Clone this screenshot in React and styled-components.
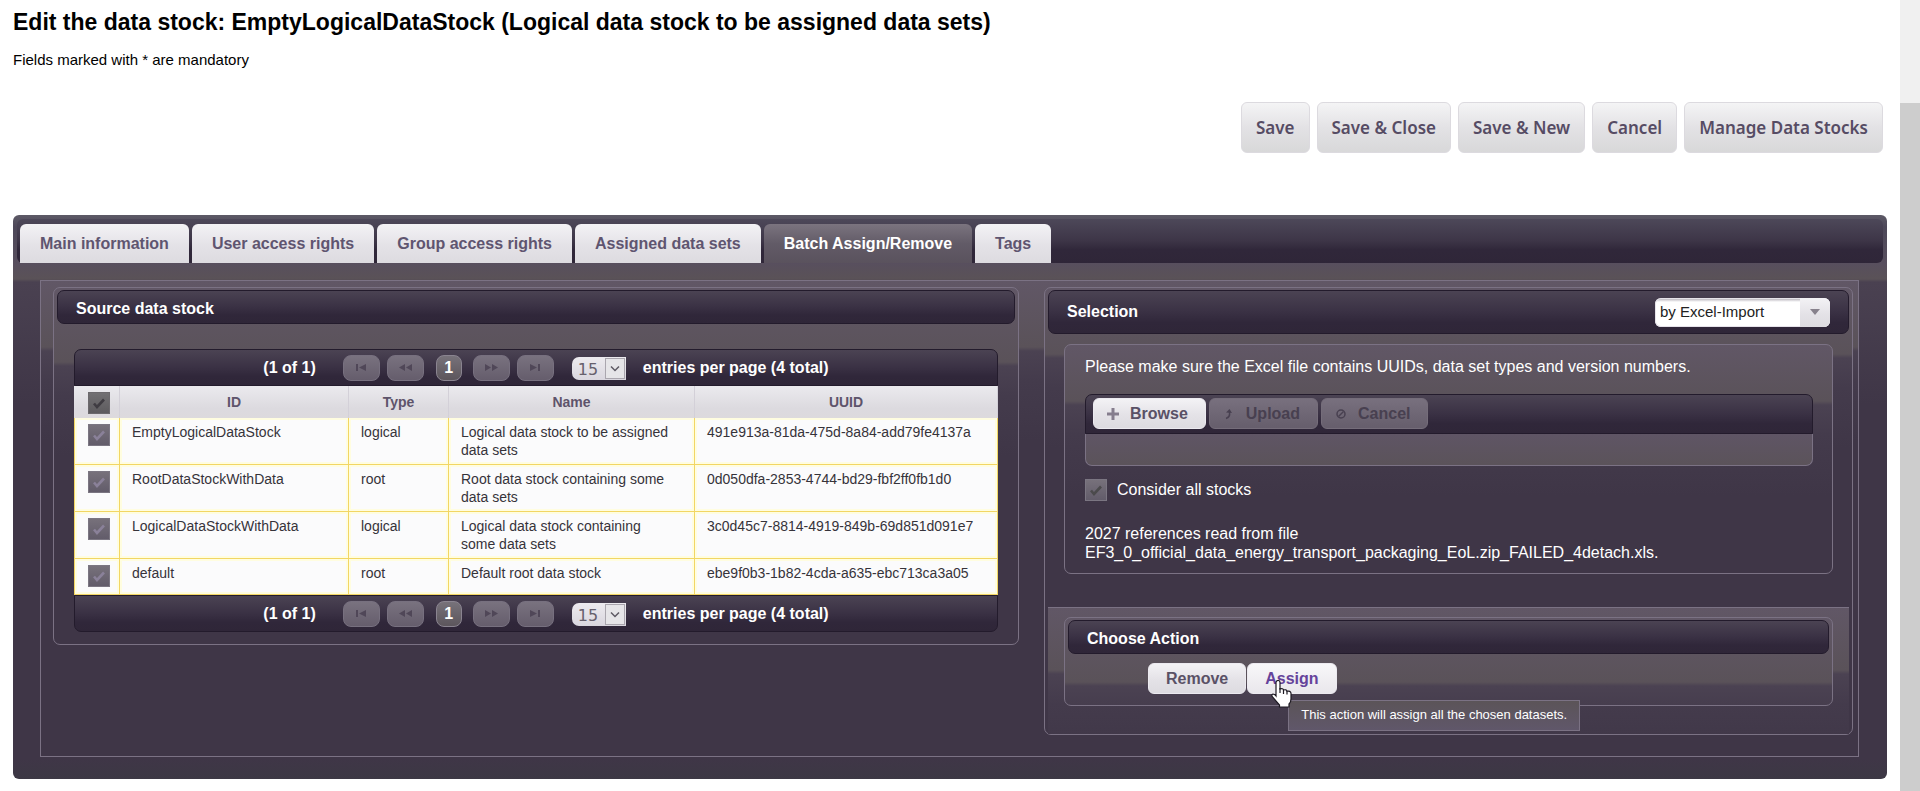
import React from 'react';
import styled, { createGlobalStyle, css } from 'styled-components';

const GlobalStyle = createGlobalStyle`
  *, *::before, *::after { box-sizing: border-box; }
  body {
    margin: 0;
    background: #fff;
    color: #000;
    font-family: "Liberation Sans", Arial, sans-serif;
    font-size: 16px;
  }
  button, input, select { font-family: inherit; margin: 0; }
`;

const line = '#7b7284';
const base = '#3f3647';
const barGradient = 'linear-gradient(#4b4353, #3a3144 50%, #30273a 75%, #2f2638)';
const buttonGradient = 'linear-gradient(#f3f2f5, #e4e2e7 55%, #dddbe0)';

/* Lit top area that breaks off into the dark base colour below. */
const gloss = (step) => css`
  background: linear-gradient(
    #615766 0, #5a5259 ${step - 4}px, #4b4252 ${step}px, #443b4c ${step + 30}px, ${base} ${step + 90}px
  );
`;

const Screen = styled.div`
  display: flex;
  min-height: 100vh;
`;

const Page = styled.main`
  flex: 1;
  min-width: 0;
  padding: 10px 13px 12px;
`;

const ScrollTrack = styled.div`
  width: 20px;
  flex: none;
  padding-top: 103px;
  background: #f0f0f0;
  display: flex;
`;

const ScrollThumb = styled.div`
  flex: 1;
  background: #cdcdcd;
`;

const Title = styled.h1`
  margin: 0;
  font-size: 23px;
  line-height: 24px;
`;

const Hint = styled.p`
  margin: 16px 0 0;
  font-size: 15px;
  line-height: 20px;
`;

const Actions = styled.div`
  display: flex;
  justify-content: flex-end;
  gap: 7px;
  margin: 32px 4px 62px 0;
`;

const ActionButton = styled.button`
  height: 51px;
  padding: 0 14px;
  border: 1px solid #dcdadf;
  border-radius: 6px;
  background: linear-gradient(#f4f4f5, #e3e2e5 50%, #d8d8d9);
  color: #564c64;
  font-family: "Noto Sans", "Open Sans", sans-serif;
  font-size: 17px;
  font-weight: 600;
`;

const TabPanel = styled.section`
  padding: 4px;
  border-radius: 6px;
  background: linear-gradient(
    #5d5a66 0, #4d4859 12px, #584f5e 48px, #5a5257 64px, #4a4151 67px, ${base} 190px, ${base} calc(100% - 20px), #3c3844
  );
`;

const TabBar = styled.nav`
  display: flex;
  gap: 3px;
  padding: 5px 3px 0;
  border-radius: 6px;
  background: linear-gradient(#4d4859, #3d3547 50%, #30273a 70%, #2f2638);
`;

const Tab = styled.button`
  height: 39px;
  padding: 0 20px;
  border: 0;
  border-radius: 6px 6px 0 0;
  background: ${(p) => (p.$active ? 'linear-gradient(#7b747f, #625b67 50%, #5a525d)' : buttonGradient)};
  color: ${(p) => (p.$active ? '#fff' : '#5f5570')};
  font-size: 16px;
  font-weight: 700;
`;

const TabContent = styled.div`
  display: grid;
  grid-template-columns: 966fr 810fr;
  gap: 25px;
  align-items: start;
  margin: 17px 24px 18px 23px;
  padding: 6px 5px 21px 12px;
  border: 1px solid ${line};
  ${gloss(70)}
`;

const Panel = styled.section`
  padding: 2px 3px ${(p) => p.$bottom || 0}px;
  border: 1px solid ${line};
  border-radius: 7px;
  ${(p) => gloss(p.$step)}
`;

const PanelHeader = styled.header`
  display: flex;
  align-items: center;
  justify-content: space-between;
  height: ${(p) => (p.$tall ? 44 : 34)}px;
  padding: ${(p) => (p.$tall ? 0 : 4)}px 18px 0;
  border: 1px solid #231b2c;
  border-radius: 7px;
  background: ${barGradient};
  color: #fff;
`;

const PanelTitle = styled.h2`
  margin: 0;
  font-size: 16px;
  line-height: 20px;
`;

const DataList = styled.div`
  margin: 25px 17px 0;
`;

const Pager = styled.div`
  display: flex;
  align-items: center;
  justify-content: center;
  height: 37px;
  padding-left: 20px;
  border: 1px solid #231b2c;
  border-radius: ${(p) => (p.$bottom ? '0 0 7px 7px' : '7px 7px 0 0')};
  background: ${barGradient};
  color: #fff;
  font-weight: 700;
`;

const PagerButtons = styled.div`
  display: flex;
  gap: 7px;
  margin: 0 18px 0 27px;
`;

const PagerButton = styled.button`
  display: grid;
  place-items: center;
  width: 37px;
  height: 26px;
  padding: 0;
  border: 1px solid #77707f;
  border-radius: 8px;
  background: linear-gradient(#79727f, #655d6c);
  color: #504758;
`;

const PageNumber = styled.button`
  width: 26px;
  height: 26px;
  margin: 0 4px 0 5px;
  padding: 0;
  border: 1px solid #8a8490;
  border-radius: 8px;
  background: linear-gradient(#77727a, #5c565c);
  color: #fff;
  font-size: 16px;
  font-weight: 700;
`;

const PageSize = styled.span`
  position: relative;
  display: flex;
  width: 54px;
  height: 23px;
  margin: 2px 17px 0 0;

  select {
    appearance: none;
    width: 100%;
    padding: 1px 0 0 6px;
    border: 0;
    border-radius: 7px 0 0 7px;
    background: linear-gradient(#edebef, #d9d6de);
    color: #66606c;
    font-family: "DejaVu Sans", sans-serif;
    font-size: 16px;
  }

  svg {
    position: absolute;
    top: 1px;
    right: 1px;
    pointer-events: none;
  }
`;

const Table = styled.table`
  width: 100%;
  table-layout: fixed;
  border-spacing: 0;
  background: #fbfbfc;
  color: #36333a;
  font-size: 14px;
  line-height: 18px;
`;

const HeadCell = styled.th`
  height: 32px;
  padding: 0;
  border-right: 1px solid #d3d0d8;
  background: linear-gradient(#ebeaee, #dcdadf 70%, #dddadd);
  color: #5e546b;
`;

const HeadCheckCell = styled(HeadCell)`
  padding: 2px 0 0 14px;
`;

const Cell = styled.td`
  height: ${(p) => (p.$last ? 36 : 47)}px;
  padding: 5px 20px 4px 12px;
  border: solid #f2d664;
  border-width: 0 1px 1px 0;
  box-shadow: inset 0 0 0 2px #fffde0;
  vertical-align: top;
`;

const CheckCell = styled(Cell)`
  padding: 6px 0 0 13px;
  border-left-width: 1px;
`;

const CheckBox = styled.span`
  display: grid;
  width: 22px;
  height: 22px;
  flex: none;

  input {
    appearance: none;
    grid-area: 1 / 1;
    border: 1px solid ${(p) => (p.$gray ? '#6c696d' : '#7b7682')};
    background: ${(p) => (p.$gray ? 'linear-gradient(#727073, #5d5b5e)' : 'linear-gradient(#77717b, #625c6a)')};
  }

  svg {
    grid-area: 1 / 1;
    place-self: center;
    pointer-events: none;
    color: ${(p) => p.$tone};
  }
`;

const ModeSelect = styled.span`
  position: relative;
  display: flex;
  width: 175px;
  height: 29px;

  select {
    appearance: none;
    width: 100%;
    padding: 0 36px 2px 5px;
    border: 0;
    border-radius: 6px;
    background: linear-gradient(#a9a3ae 0, #fff 4px);
    color: #222;
    font-size: 15px;
    box-shadow: inset 0 0 0 1px #e6e3ea;
  }
`;

const ModeArrow = styled.span`
  position: absolute;
  inset: 0 0 0 auto;
  display: grid;
  place-items: center;
  width: 30px;
  border-radius: 0 6px 6px 0;
  background: ${buttonGradient};
  color: #87818c;
  pointer-events: none;
`;

const ImportBox = styled.div`
  margin: 10px 16px 33px;
  padding: 12px 19px 11px 20px;
  border: 1px solid ${line};
  border-radius: 7px;
  ${gloss(60)}
  color: #fff;
`;

const Message = styled.p`
  margin: ${(p) => p.$top || 0}px 0 0;
  line-height: ${(p) => (p.$top ? 19 : 20)}px;
`;

const UploadBar = styled.div`
  display: flex;
  gap: 3px;
  height: 40px;
  margin-top: 17px;
  padding: 3px 7px 0;
  border: 1px solid #231b2c;
  border-radius: 7px 7px 0 0;
  background: ${barGradient};
`;

const UploadArea = styled.div`
  height: 32px;
  border: 1px solid ${line};
  border-top: 0;
  border-radius: 0 0 7px 7px;
  background: linear-gradient(#5f5565, #5b535a);
`;

const Button = styled.button`
  display: flex;
  align-items: center;
  gap: 11px;
  height: 31px;
  padding: 0 17px 0 ${(p) => (p.$icon ? 13 : 17)}px;
  border: 1px solid #eceaf0;
  border-radius: 6px;
  background: ${buttonGradient};
  color: #5a5166;
  font-size: 16px;
  font-weight: 700;

  &:disabled {
    border-color: #756d7a;
    background: linear-gradient(#78707e, #665e6c);
    color: #484050;
  }
`;

const HoverButton = styled(Button)`
  background: linear-gradient(#f8f7f9, #e9e7ec);
  color: #65439b;
`;

const OptionRow = styled.label`
  display: flex;
  align-items: center;
  gap: 10px;
  margin-top: 13px;
`;

const ActionArea = styled.div`
  padding: 9px 16px 28px;
  border-top: 1px solid ${line};
  ${gloss(66)}
`;

const ActionRow = styled.div`
  display: flex;
  gap: 1px;
  margin: 9px 0 11px 80px;
`;

const Hovered = styled.span`
  position: relative;
`;

const Pointer = styled.svg`
  position: absolute;
  left: 24px;
  top: 17px;
  z-index: 2;
`;

const Tooltip = styled.span`
  position: absolute;
  left: 41px;
  top: 37px;
  z-index: 1;
  padding: 5px 12px 6px;
  border: 1px solid ${line};
  background: linear-gradient(#5b5458, #60576a);
  color: #fff;
  font-size: 13px;
  line-height: 18px;
  white-space: nowrap;
`;

const Check = () => (
  <svg width="14" height="14" viewBox="0 0 14 14">
    <path d="M2 7.5 5 11 12 3.5" fill="none" stroke="currentColor" strokeWidth="2.6" />
  </svg>
);

const pagerIcons = {
  First: 'M1 1h2v7H1zM11 1v7L4 4.500z',
  Previous: 'M6 1v7L0 4.500zM13 1v7L7 4.500z',
  Next: 'M0 1v7l6-3.500zM7 1v7l6-3.500z',
  Last: 'M1 1v7l7-3.500zM9 1h2v7H9z',
};

const PagerIconButton = ({ name }) => (
  <PagerButton disabled aria-label={`${name} page`}>
    <svg width="13" height="9" viewBox="0 0 13 9"><path d={pagerIcons[name]} fill="currentColor" /></svg>
  </PagerButton>
);

const Paginator = ({ bottom }) => (
  <Pager $bottom={bottom}>
    <span>(1 of 1)</span>
    <PagerButtons>
      <PagerIconButton name="First" />
      <PagerIconButton name="Previous" />
      <PageNumber>1</PageNumber>
      <PagerIconButton name="Next" />
      <PagerIconButton name="Last" />
    </PagerButtons>
    <PageSize>
      <select aria-label="Rows per page" defaultValue="15"><option>15</option></select>
      <svg width="20" height="21" viewBox="0 0 20 21">
        <rect x="0.5" y="0.5" width="19" height="20" fill="#e6e5e8" stroke="#aaa6ae" />
        <path d="M6 8.500l4 4 4-4" fill="none" stroke="#5d5963" strokeWidth="1.500" />
      </svg>
    </PageSize>
    <span>entries per page (4 total)</span>
  </Pager>
);

const stocks = [
  ['EmptyLogicalDataStock', 'logical', 'Logical data stock to be assigned data sets', '491e913a-81da-475d-8a84-add79fe4137a'],
  ['RootDataStockWithData', 'root', 'Root data stock containing some data sets', '0d050dfa-2853-4744-bd29-fbf2ff0fb1d0'],
  ['LogicalDataStockWithData', 'logical', 'Logical data stock containing some data sets', '3c0d45c7-8814-4919-849b-69d851d091e7'],
  ['default', 'root', 'Default root data stock', 'ebe9f0b3-1b82-4cda-a635-ebc713ca3a05'],
];

const StockTable = () => (
  <Table>
    <colgroup>
      <col width="46" /><col width="229" /><col width="100" /><col width="246" /><col width="303" />
    </colgroup>
    <thead>
      <tr>
        <HeadCheckCell>
          <CheckBox $gray $tone="#3f3c42">
            <input type="checkbox" defaultChecked aria-label="Select all" /><Check />
          </CheckBox>
        </HeadCheckCell>
        {['ID', 'Type', 'Name', 'UUID'].map((h) => <HeadCell key={h}>{h}</HeadCell>)}
      </tr>
    </thead>
    <tbody>
      {stocks.map((row, i) => (
        <tr key={row[0]}>
          <CheckCell $last={i === 3}>
            <CheckBox $tone="#8a8199">
              <input type="checkbox" defaultChecked aria-label={`Select ${row[0]}`} /><Check />
            </CheckBox>
          </CheckCell>
          {row.map((v) => <Cell key={v} $last={i === 3}>{v}</Cell>)}
        </tr>
      ))}
    </tbody>
  </Table>
);

const tabs = ['Main information', 'User access rights', 'Group access rights', 'Assigned data sets', 'Batch Assign/Remove', 'Tags'];

export default function App() {
  return (
    <Screen>
      <GlobalStyle />
      <Page>
        <Title>Edit the data stock: EmptyLogicalDataStock (Logical data stock to be assigned data sets)</Title>
        <Hint>Fields marked with * are mandatory</Hint>
        <Actions>
          {['Save', 'Save & Close', 'Save & New', 'Cancel', 'Manage Data Stocks'].map((a) => (
            <ActionButton key={a}>{a}</ActionButton>
          ))}
        </Actions>
        <TabPanel>
          <TabBar>
            {tabs.map((t) => <Tab key={t} $active={t === 'Batch Assign/Remove'}>{t}</Tab>)}
          </TabBar>
          <TabContent>
            <Panel $step={78} $bottom={12}>
              <PanelHeader><PanelTitle>Source data stock</PanelTitle></PanelHeader>
              <DataList>
                <Paginator />
                <StockTable />
                <Paginator bottom />
              </DataList>
            </Panel>
            <Panel $step={70}>
              <PanelHeader $tall>
                <PanelTitle>Selection</PanelTitle>
                <ModeSelect>
                  <select aria-label="Selection mode" defaultValue="by Excel-Import"><option>by Excel-Import</option></select>
                  <ModeArrow>
                    <svg width="10" height="6" viewBox="0 0 10 6"><path d="M0 0h10L5 6z" fill="currentColor" /></svg>
                  </ModeArrow>
                </ModeSelect>
              </PanelHeader>
              <ImportBox>
                <Message>Please make sure the Excel file contains UUIDs, data set types and version numbers.</Message>
                <UploadBar>
                  <Button $icon>
                    <svg width="12" height="12" viewBox="0 0 12 12"><path d="M4.500 0h3v4.500H12v3H7.500V12h-3V7.500H0v-3h4.500z" fill="#857d8d" /></svg>
                    Browse
                  </Button>
                  <Button $icon disabled>
                    <svg width="12" height="12" viewBox="0 0 12 12"><path d="M3 10.500C6 9.500 7 7 6.500 4" fill="none" stroke="currentColor" strokeWidth="1.500" /><path d="M3 4.500 6.500 1 9 5z" fill="currentColor" /></svg>
                    Upload
                  </Button>
                  <Button $icon disabled>
                    <svg width="12" height="12" viewBox="0 0 12 12"><circle cx="6" cy="6" r="4" fill="none" stroke="currentColor" strokeWidth="1.500" /><path d="M3.500 8.500l5-5" stroke="currentColor" strokeWidth="1.500" /></svg>
                    Cancel
                  </Button>
                </UploadBar>
                <UploadArea />
                <OptionRow>
                  <CheckBox $tone="#4b4a4c">
                    <input type="checkbox" defaultChecked /><Check />
                  </CheckBox>
                  Consider all stocks
                </OptionRow>
                <Message $top={23}>
                  2027 references read from file<br />
                  EF3_0_official_data_energy_transport_packaging_EoL.zip_FAILED_4detach.xls.
                </Message>
              </ImportBox>
              <ActionArea>
                <Panel $step={68}>
                  <PanelHeader><PanelTitle>Choose Action</PanelTitle></PanelHeader>
                  <ActionRow>
                    <Button>Remove</Button>
                    <Hovered>
                      <HoverButton aria-describedby="assign-tip">Assign</HoverButton>
                      <Pointer width="21" height="28" viewBox="0 0 21 28" aria-hidden="true">
                        <path
                          d="M5 2.500a2 2 0 0 1 4 0V9q3-1 3.500 1 3-.8 3.500 1.200 3.500-.7 4 2V19q0 3-2 5v3H8.500v-2L1.500 17q-1.500-2.500.5-3 1.500 0 3 2z"
                          fill="#fff" stroke="#1d1922" strokeWidth="1.200"
                        />
                        <path d="M9 8v5M12.500 9.500V14M16 11v3.500" stroke="#1d1922" strokeWidth="1.200" />
                      </Pointer>
                      <Tooltip id="assign-tip" role="tooltip">This action will assign all the chosen datasets.</Tooltip>
                    </Hovered>
                  </ActionRow>
                </Panel>
              </ActionArea>
            </Panel>
          </TabContent>
        </TabPanel>
      </Page>
      <ScrollTrack><ScrollThumb /></ScrollTrack>
    </Screen>
  );
}
